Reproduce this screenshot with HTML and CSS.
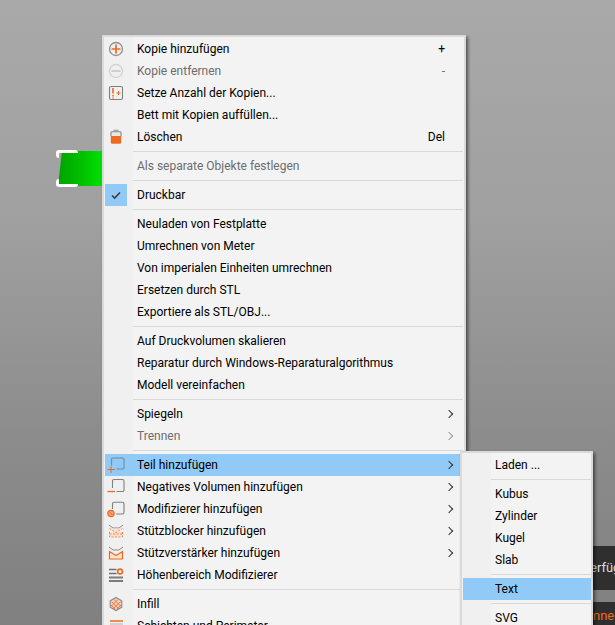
FILE: index.html
```html
<!DOCTYPE html>
<html lang="de">
<head>
<meta charset="utf-8">
<title>Kontextmenü</title>
<link rel="stylesheet" href="styles.css">
</head>
<body>
<div class="canvas">
  <div class="model"><div class="model-body"></div><span class="corner tl"></span><span class="corner bl"></span></div>
  <div class="notice"><span class="notice-text">erfüg</span></div>
  <div class="notice-link"><span class="notice-link-text">nnell</span></div>

  <div class="menu main">
    <div class="item"><span class="ic"><svg viewBox="0 0 16 16" width="16" height="16"><circle cx="8" cy="8" r="6.500" fill="none" stroke="#8f8f8f" stroke-width="1.300"/><path d="M8 3.500v9M3.500 8h9" stroke="#ed6b21" stroke-width="1.700"/></svg></span><span class="lb">Kopie hinzufügen</span><span class="sc">+</span></div>
    <div class="item off"><span class="ic"><svg viewBox="0 0 16 16" width="16" height="16"><circle cx="8" cy="8" r="6.500" fill="none" stroke="#d2d2d2" stroke-width="1.300"/><path d="M3.500 8h9" stroke="#c8c8c8" stroke-width="1.700"/></svg></span><span class="lb">Kopie entfernen</span><span class="sc">-</span></div>
    <div class="item"><span class="ic"><svg viewBox="0 0 16 16" width="16" height="16"><rect x="1.500" y="1.500" width="13" height="13" rx="1.500" fill="none" stroke="#808080" stroke-width="1.100"/><path d="M5 3v5.500M5 10v1.500M5 12.500v1" stroke="#ed6b21" stroke-width="1.600"/><path d="M8.500 8h4M10.500 6v4" stroke="#ed6b21"/></svg></span><span class="lb">Setze Anzahl der Kopien...</span></div>
    <div class="item"><span class="ic"></span><span class="lb">Bett mit Kopien auffüllen...</span></div>
    <div class="item"><span class="ic"><svg viewBox="0 0 16 16" width="16" height="16"><path d="M5.500 1.300h5" stroke="#a0a0a0" stroke-width="1.200"/><path d="M3 7V3.800a1.200 1.200 0 0 1 1.200-1.200h7.600A1.200 1.200 0 0 1 13 3.800V7" fill="#e8e8e8" stroke="#999" stroke-width="1.300"/><path d="M2.800 7h10.400v6.300a1.500 1.500 0 0 1-1.500 1.500H4.300a1.500 1.500 0 0 1-1.500-1.500z" fill="#ed6b21"/></svg></span><span class="lb">Löschen</span><span class="sc">Del</span></div>
    <div class="sep"></div>
    <div class="item off"><span class="ic"></span><span class="lb">Als separate Objekte festlegen</span></div>
    <div class="sep"></div>
    <div class="item"><span class="ic checked"><svg viewBox="0 0 16 16" width="16" height="16"><path d="M4 8.500l2.700 2.600 5.300-5.600" fill="none" stroke="#3c3c3c" stroke-width="1.500"/></svg></span><span class="lb">Druckbar</span></div>
    <div class="sep"></div>
    <div class="item"><span class="ic"></span><span class="lb">Neuladen von Festplatte</span></div>
    <div class="item"><span class="ic"></span><span class="lb">Umrechnen von Meter</span></div>
    <div class="item"><span class="ic"></span><span class="lb">Von imperialen Einheiten umrechnen</span></div>
    <div class="item"><span class="ic"></span><span class="lb">Ersetzen durch STL</span></div>
    <div class="item"><span class="ic"></span><span class="lb">Exportiere als STL/OBJ...</span></div>
    <div class="sep"></div>
    <div class="item"><span class="ic"></span><span class="lb">Auf Druckvolumen skalieren</span></div>
    <div class="item"><span class="ic"></span><span class="lb">Reparatur durch Windows-Reparaturalgorithmus</span></div>
    <div class="item"><span class="ic"></span><span class="lb">Modell vereinfachen</span></div>
    <div class="sep"></div>
    <div class="item"><span class="ic"></span><span class="lb">Spiegeln</span><span class="ar"></span></div>
    <div class="item off"><span class="ic"></span><span class="lb">Trennen</span><span class="ar"></span></div>
    <div class="sep"></div>
    <div class="item hot"><span class="ic"><svg viewBox="0 0 16 16" width="16" height="16"><path d="M3.500 8.500V2.500A1.500 1.500 0 0 1 5 1h9.500A1.500 1.500 0 0 1 16 2.500v8a1.500 1.500 0 0 1-1.500 1.500H8.500" fill="none" stroke="#7c8894" stroke-width="1.100"/><path d="M3 9.500v6.500M-.500 12.500h7.500" stroke="#ed6b21" stroke-width="1.100"/></svg></span><span class="lb">Teil hinzufügen</span><span class="ar"></span></div>
    <div class="item"><span class="ic"><svg viewBox="0 0 16 16" width="16" height="16"><path d="M4.500 9V2A1.500 1.500 0 0 1 6 .5h8.500A1.500 1.500 0 0 1 16 2v9a1.500 1.500 0 0 1-1.500 1.500H8.500" fill="none" stroke="#808080" stroke-width="1.100"/><path d="M-.500 12.500h7.500" stroke="#ed6b21" stroke-width="1.300"/></svg></span><span class="lb">Negatives Volumen hinzufügen</span><span class="ar"></span></div>
    <div class="item"><span class="ic"><svg viewBox="0 0 16 16" width="16" height="16"><path d="M4.500 8V2.800A1.500 1.500 0 0 1 6 1.300h8.500A1.500 1.500 0 0 1 16 2.800v8.700a1.500 1.500 0 0 1-1.500 1.500H8.200" fill="none" stroke="#808080" stroke-width="1.100"/><circle cx="3" cy="12.500" r="3.200" fill="#f0a67a" stroke="#ed6b21" stroke-width="1.200"/><path d="M1.300 10.800l3.400 3.400" stroke="#ed6b21"/></svg></span><span class="lb">Modifizierer hinzufügen</span><span class="ar"></span></div>
    <div class="item"><span class="ic"><svg viewBox="0 0 16 16" width="16" height="16"><path d="M1 2l4 3h6l4-3" fill="none" stroke="#8a8a8a"/><path d="M1.500 5.500l6.500 4 6.500-4M1.500 9v5h13V9" fill="#f8e0d0" stroke="#ef8a4f" stroke-dasharray="2 1.500"/><path d="M1.500 11h13" stroke="#ef8a4f" stroke-dasharray="2 1.500"/></svg></span><span class="lb">Stützblocker hinzufügen</span><span class="ar"></span></div>
    <div class="item"><span class="ic"><svg viewBox="0 0 16 16" width="16" height="16"><path d="M1 2l4 3h6l4-3" fill="none" stroke="#8a8a8a"/><path d="M1.500 6.500v7.500h13V6.500L8 10.500z" fill="#f9e3d5" stroke="#ed6b21" stroke-width="1.200"/></svg></span><span class="lb">Stützverstärker hinzufügen</span><span class="ar"></span></div>
    <div class="item"><span class="ic"><svg viewBox="0 0 16 16" width="16" height="16"><path d="M1 2.500h7.500M1 6.500h7.500" stroke="#707070" stroke-width="1.500"/><path d="M1 10.500h14M1 14h14" stroke="#7c7c7c" stroke-width="1.800"/><circle cx="12" cy="4.500" r="2.400" fill="none" stroke="#ed6b21" stroke-width="1.600"/></svg></span><span class="lb">Höhenbereich Modifizierer</span></div>
    <div class="sep"></div>
    <div class="item"><span class="ic"><svg viewBox="0 0 16 16" width="16" height="16"><path d="M8 1.500l5.800 3.200v6.600L8 14.500l-5.800-3.200V4.700z" fill="#f6cdb4" stroke="#8a8a8a" stroke-width="1.100"/><path d="M3.500 5.500l7.500 7.500M6 3.500l7 7M3 9l4 4M10 3.500L3 10.500M12.800 5.500L5 13M13 9l-4 4" stroke="#e2703a" stroke-width=".8"/></svg></span><span class="lb">Infill</span></div>
    <div class="item"><span class="ic"><svg viewBox="0 0 16 16" width="16" height="16"><path d="M2 3h13M2 9h13" stroke="#ed6b21" stroke-width="1.500"/><path d="M2 6h13" stroke="#c8c8c8" stroke-width="1.500"/></svg></span><span class="lb">Schichten und Perimeter</span></div>
  </div>

  <div class="menu sub">
    <div class="item"><span class="lb">Laden ...</span></div>
    <div class="sep"></div>
    <div class="item"><span class="lb">Kubus</span></div>
    <div class="item"><span class="lb">Zylinder</span></div>
    <div class="item"><span class="lb">Kugel</span></div>
    <div class="item"><span class="lb">Slab</span></div>
    <div class="sep"></div>
    <div class="item hot"><span class="lb">Text</span></div>
    <div class="sep"></div>
    <div class="item"><span class="lb">SVG</span></div>
  </div>
</div>
</body>
</html>
```
FILE: styles.css
```css
html, body {
  margin: 0;
  padding: 0;
  height: 100%;
  overflow: hidden;
}
.canvas {
  position: relative;
  width: 615px;
  height: 625px;
  overflow: hidden;
  background: linear-gradient(180deg, #a9a9a9 0%, #a0a0a0 35%, #8c8c8c 70%, #808080 100%);
  font-family: Roboto, "Noto Sans", sans-serif;
  font-size: 12px;
  color: #000;
}
.model {
  position: absolute;
  left: 56px;
  top: 150px;
  width: 60px;
  height: 37px;
}
.model-body {
  position: absolute;
  inset: 1px 0 1px 2px;
  background: linear-gradient(90deg, #00a200 0%, #00c400 45%, #00e000 75%, #00d800 100%);
  clip-path: polygon(4px 0, 100% 0, 100% 100%, 0 100%);
}
.corner {
  position: absolute;
  left: 0;
  width: 19px;
  height: 5px;
  border-left: 3px solid #fff;
  border-radius: 3px;
}
.corner.tl { top: 0; border-top: 3px solid #fff; }
.corner.bl { bottom: 0; border-bottom: 3px solid #fff; }
.notice {
  position: absolute;
  left: 590px;
  top: 546px;
  width: 25px;
  height: 44px;
  background: #2f2f2f;
  color: #ddd;
  font-size: 13px;
  line-height: 44px;
  overflow: hidden;
}
.notice-text { display: block; width: 40px; }
.notice-link {
  position: absolute;
  left: 590px;
  top: 602px;
  width: 25px;
  height: 23px;
  background: #2f2f2f;
  color: #ed6b21;
  font-size: 13px;
  line-height: 28px;
  overflow: hidden;
}
.notice-link-text { display: block; width: 40px; margin-left: 3px; }
.menu {
  position: absolute;
  box-sizing: border-box;
  background: linear-gradient(90deg, #f0f0f0 29px, #f3f3f3 29px);
  border: 2px solid #dadada;
  box-shadow: 2px 2px 3px rgba(0, 0, 0, .5);
}
.main {
  left: 102px;
  top: 35px;
  width: 364px;
  padding: 1px 1px;
}
.sub {
  left: 460px;
  top: 451px;
  width: 133px;
  padding: 1px 0 1px 1px;
  z-index: 2;
}
.item {
  display: flex;
  align-items: center;
  height: 22px;
  line-height: 22px;
  white-space: nowrap;
}
.item.off { color: #6d6d6d; }
.item.hot { background: #91c9f7; }
.ic {
  flex: none;
  width: 22px;
  height: 22px;
  display: flex;
  align-items: center;
  justify-content: center;
}
.ic svg { overflow: visible; }
.ic.checked { background: #91c9f7; }
.lb {
  margin-left: 10px;
  flex: 1;
}
.sub .lb { margin-left: 32px; }
.sc { margin-right: 18px; }
.ar {
  flex: none;
  width: 5px;
  height: 5px;
  margin-right: 11px;
  border-top: 1px solid #333;
  border-right: 1px solid #333;
  transform: rotate(45deg);
}
.off .ar { border-color: #999; }
.sep {
  height: 1px;
  margin: 3px 0 3px 28px;
  background: #d9d9d9;
}
```
